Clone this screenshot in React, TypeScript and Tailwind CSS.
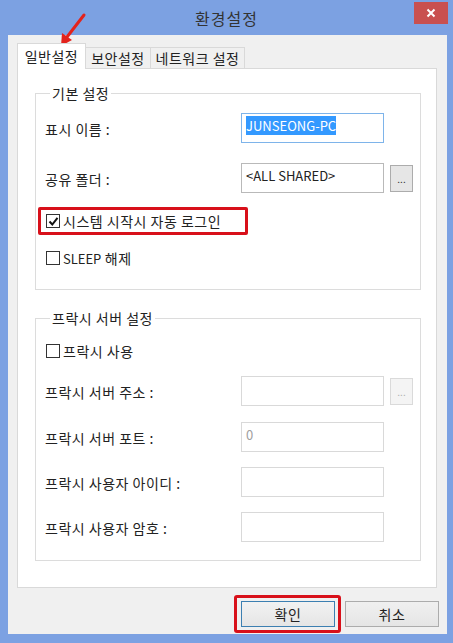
import type { ReactNode } from 'react'

const font = { fontFamily: '"Noto Sans CJK KR", "Noto Sans", sans-serif' }

function CheckBox({ checked = false }: { checked?: boolean }) {
  return (
    <span className="w-[14px] h-[14px] border border-[#333] bg-white flex items-center justify-center shrink-0">
      {checked && (
        <svg width="11" height="11" viewBox="0 0 11 11">
          <path d="M1.5 5.5 L4.3 8.5 L9.5 1.8" fill="none" stroke="#111" strokeWidth="2" />
        </svg>
      )}
    </span>
  )
}

function Field({ value, disabled, focused, gray }: { value?: ReactNode; disabled?: boolean; focused?: boolean; gray?: boolean }) {
  const border = focused ? 'border-[#7eb4ea]' : disabled ? 'border-[#d9d9d9]' : 'border-[#b9b9b9]'
  return (
    <div className={`w-[143px] h-[30px] border ${border} bg-white px-[4px] pt-[3px] text-[13px] leading-[18px] tracking-normal ${gray ? 'text-[#a0a0a0]' : 'text-[#222]'}`}>
      {value}
    </div>
  )
}

function DotButton({ disabled }: { disabled?: boolean }) {
  return (
    <div className={`ml-[6px] w-[23px] h-[27px] border flex items-center justify-center text-[10px] tracking-normal ${disabled ? 'border-[#dadada] bg-[#f4f4f4] text-[#b0b0b0]' : 'border-[#acacac] bg-[#e6e6e6] text-[#333]'}`}>
      ...
    </div>
  )
}

function Row({ label, children, className = '' }: { label: string; children: ReactNode; className?: string }) {
  return (
    <div className={`flex items-center h-[30px] ${className}`}>
      <div className="w-[196px] text-[14px] text-[#222] pt-[3px]">{label}</div>
      {children}
    </div>
  )
}

export default function App() {
  return (
    <div className="relative w-[453px] h-[643px] bg-[#7ca1e2] flex flex-col overflow-hidden tracking-[0.5px]" style={font}>
      <div className="relative h-[35px] flex items-center justify-center">
        <span className="text-[16px] text-[#333] tracking-[1px]">환경설정</span>
        <div className="absolute right-[5px] top-[2px] w-[34px] h-[22px] bg-[#c9504f] flex items-center justify-center">
          <svg width="10" height="10" viewBox="0 0 10 10">
            <path d="M1.5 1.5 L8.5 8.5 M8.5 1.5 L1.5 8.5" stroke="#fff" strokeWidth="2" />
          </svg>
        </div>
      </div>

      <div className="ml-[8px] mr-[6px] h-[599px] bg-[#f0f0f0] pt-[8px] pl-[9px] pr-[10px]">
        <div className="h-[25px] flex items-end text-[14px] text-[#222]">
          <div className="relative z-10 w-[69px] h-[26px] -mb-px bg-white border border-b-0 border-[#d9d9d9] flex items-center justify-center">일반설정</div>
          <div className="w-[65px] h-[21px] border border-l-0 border-b-0 border-[#d9d9d9] flex items-center justify-center bg-[#f0f0f0]">보안설정</div>
          <div className="w-[94px] h-[21px] border border-l-0 border-b-0 border-[#d9d9d9] flex items-center justify-center bg-[#f0f0f0]">네트워크 설정</div>
        </div>

        <div className="h-[520px] border border-[#d9d9d9] bg-white pl-[17px] pr-[15px] pt-[15px]">
          <fieldset className="border border-[#dcdcdc] pl-[9px] pb-[21px]">
            <legend className="ml-[5px] px-[2px] text-[14px] leading-[18px] text-[#222]">기본 설정</legend>
            <Row label="표시 이름 :" className="mt-[11px]">
              <Field focused value={<span className="bg-[#3399ff] text-white">JUNSEONG-PC</span>} />
            </Row>
            <Row label="공유 폴더 :" className="mt-[20px]">
              <Field value="<ALL SHARED>" />
              <DotButton />
            </Row>
            <div className="mt-[14px] ml-[-7px] w-[210px] h-[28px] border-[3px] border-[#d8101a] rounded-[2px] flex items-center gap-[3px] pl-[5px] text-[14px] text-[#222]">
              <CheckBox checked />
              <span>시스템 시작시 자동 로그인</span>
            </div>
            <div className="mt-[13px] h-[20px] flex items-center gap-[3px] pl-[1px] text-[13px] text-[#222]">
              <CheckBox />
              <span><span className="tracking-normal">SLEEP</span> <span className="text-[14px]">해제</span></span>
            </div>
          </fieldset>

          <fieldset className="mt-[19px] border border-[#dcdcdc] pl-[9px] pb-[18px]">
            <legend className="ml-[5px] px-[2px] text-[14px] leading-[18px] text-[#222]">프락시 서버 설정</legend>
            <div className="mt-[14px] h-[20px] flex items-center gap-[3px] pl-[1px] text-[14px] text-[#222]">
              <CheckBox />
              <span>프락시 사용</span>
            </div>
            <Row label="프락시 서버 주소 :" className="mt-[15px]">
              <Field disabled />
              <DotButton disabled />
            </Row>
            <Row label="프락시 서버 포트 :" className="mt-[16px]">
              <Field disabled gray value="0" />
            </Row>
            <Row label="프락시 사용자 아이디 :" className="mt-[15px]">
              <Field disabled />
            </Row>
            <Row label="프락시 사용자 암호 :" className="mt-[15px]">
              <Field disabled />
            </Row>
          </fieldset>
        </div>

        <div className="mt-[7px] -mr-[2px] flex justify-end items-start gap-[4px] text-[14px] text-[#222]">
          <div className="border-[3px] border-[#d8101a] rounded-[3px] pl-[4px] pr-[3px] py-[3px]">
            <div className="w-[94px] h-[26px] border border-[#3c7fb1] bg-gradient-to-b from-[#f2f2f2] to-[#e5e5e5] flex items-center justify-center">확인</div>
          </div>
          <div className="mt-[6px] w-[94px] h-[26px] border border-[#acacac] bg-gradient-to-b from-[#f0f0f0] to-[#e5e5e5] flex items-center justify-center">취소</div>
        </div>
      </div>

      <svg className="absolute left-0 top-0" width="100" height="60" viewBox="0 0 100 60">
        <path d="M84 15 L67 37" stroke="#e3231c" strokeWidth="3" strokeLinecap="round" />
        <path d="M61 46 L62 33 L72 40 Z" fill="#e3231c" />
      </svg>
    </div>
  )
}
